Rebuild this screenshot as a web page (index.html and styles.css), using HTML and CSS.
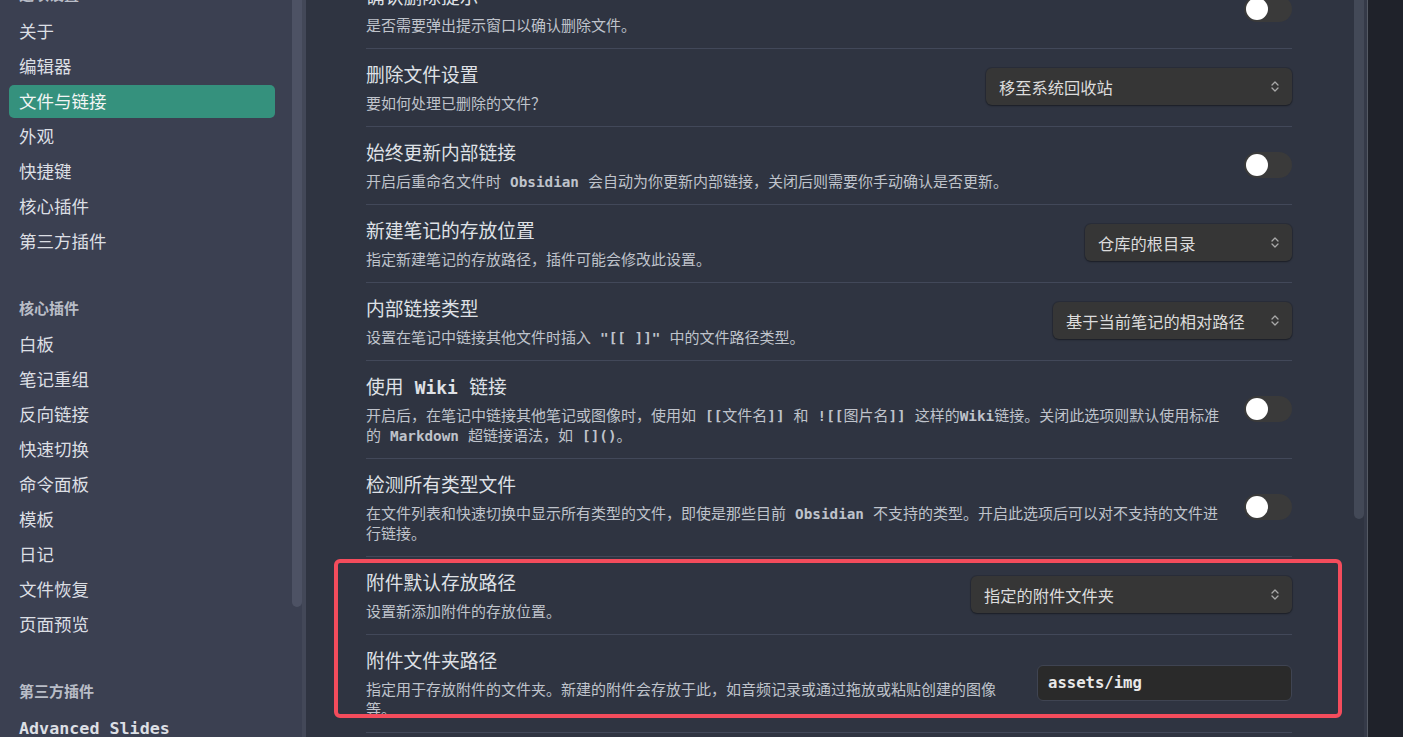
FILE: index.html
```html
<!DOCTYPE html>
<html lang="zh-CN">
<head>
<meta charset="utf-8">
<title>设置 - 文件与链接</title>
<link rel="stylesheet" href="styles.css">
</head>
<body>
<div class="app">
  <aside class="sidebar">
    <nav class="nav">
      <div class="nav-inner">
        <div class="nav-group first">
          <div class="nav-header">选项设置</div>
          <div class="nav-item">关于</div>
          <div class="nav-item">编辑器</div>
          <div class="nav-item active">文件与链接</div>
          <div class="nav-item">外观</div>
          <div class="nav-item">快捷键</div>
          <div class="nav-item">核心插件</div>
          <div class="nav-item">第三方插件</div>
        </div>
        <div class="nav-group">
          <div class="nav-header">核心插件</div>
          <div class="nav-item">白板</div>
          <div class="nav-item">笔记重组</div>
          <div class="nav-item">反向链接</div>
          <div class="nav-item">快速切换</div>
          <div class="nav-item">命令面板</div>
          <div class="nav-item">模板</div>
          <div class="nav-item">日记</div>
          <div class="nav-item">文件恢复</div>
          <div class="nav-item">页面预览</div>
        </div>
        <div class="nav-group">
          <div class="nav-header">第三方插件</div>
          <div class="nav-item"><span class="m">Advanced Slides</span></div>
        </div>
      </div>
    </nav>
    <div class="side-scroll"><div class="side-thumb"></div><div class="side-track"></div></div>
  </aside>

  <main class="main">
    <div class="main-body">
      <div class="settings">
        <div class="row">
          <div class="info">
            <div class="name">确认删除提示</div>
            <div class="desc">是否需要弹出提示窗口以确认删除文件。</div>
          </div>
          <div class="toggle"><span class="knob"></span></div>
        </div>
        <div class="row">
          <div class="info">
            <div class="name">删除文件设置</div>
            <div class="desc">要如何处理已删除的文件？</div>
          </div>
          <div class="select w-trash"><span>移至系统回收站</span><svg class="chev" viewBox="0 0 8 13" width="8" height="13"><path d="M1 5 L4 2 L7 5 M1 8 L4 11 L7 8" fill="none" stroke="currentColor" stroke-width="1.3" stroke-linecap="round" stroke-linejoin="round"/></svg></div>
        </div>
        <div class="row">
          <div class="info">
            <div class="name">始终更新内部链接</div>
            <div class="desc">开启后重命名文件时 <span class="m">Obsidian</span> 会自动为你更新内部链接，关闭后则需要你手动确认是否更新。</div>
          </div>
          <div class="toggle"><span class="knob"></span></div>
        </div>
        <div class="row">
          <div class="info">
            <div class="name">新建笔记的存放位置</div>
            <div class="desc">指定新建笔记的存放路径，插件可能会修改此设置。</div>
          </div>
          <div class="select w-root"><span>仓库的根目录</span><svg class="chev" viewBox="0 0 8 13" width="8" height="13"><path d="M1 5 L4 2 L7 5 M1 8 L4 11 L7 8" fill="none" stroke="currentColor" stroke-width="1.3" stroke-linecap="round" stroke-linejoin="round"/></svg></div>
        </div>
        <div class="row">
          <div class="info">
            <div class="name">内部链接类型</div>
            <div class="desc">设置在笔记中链接其他文件时插入 <span class="m">"[[ ]]"</span> 中的文件路径类型。</div>
          </div>
          <div class="select w-rel"><span>基于当前笔记的相对路径</span><svg class="chev" viewBox="0 0 8 13" width="8" height="13"><path d="M1 5 L4 2 L7 5 M1 8 L4 11 L7 8" fill="none" stroke="currentColor" stroke-width="1.3" stroke-linecap="round" stroke-linejoin="round"/></svg></div>
        </div>
        <div class="row">
          <div class="info">
            <div class="name">使用 <span class="m">Wiki</span> 链接</div>
            <div class="desc">开启后，在笔记中链接其他笔记或图像时，使用如 <span class="m">[[</span>文件名<span class="m">]]</span> 和 <span class="m">![[</span>图片名<span class="m">]]</span> 这样的<span class="m">Wiki</span>链接。关闭此选项则默认使用标准的 <span class="m">Markdown</span> 超链接语法，如 <span class="m">[]()</span>。</div>
          </div>
          <div class="toggle"><span class="knob"></span></div>
        </div>
        <div class="row">
          <div class="info">
            <div class="name">检测所有类型文件</div>
            <div class="desc">在文件列表和快速切换中显示所有类型的文件，即使是那些目前 <span class="m">Obsidian</span> 不支持的类型。开启此选项后可以对不支持的文件进行链接。</div>
          </div>
          <div class="toggle"><span class="knob"></span></div>
        </div>
        <div class="row">
          <div class="info">
            <div class="name">附件默认存放路径</div>
            <div class="desc">设置新添加附件的存放位置。</div>
          </div>
          <div class="select w-attach"><span>指定的附件文件夹</span><svg class="chev" viewBox="0 0 8 13" width="8" height="13"><path d="M1 5 L4 2 L7 5 M1 8 L4 11 L7 8" fill="none" stroke="currentColor" stroke-width="1.3" stroke-linecap="round" stroke-linejoin="round"/></svg></div>
        </div>
        <div class="row">
          <div class="info">
            <div class="name">附件文件夹路径</div>
            <div class="desc">指定用于存放附件的文件夹。新建的附件会存放于此，如音频记录或通过拖放或粘贴创建的图像等。</div>
          </div>
          <div class="text-input">assets/img</div>
        </div>
        <div class="row">
          <div class="info">
            <div class="name">新附件的默认位置</div>
            <div class="desc">新添加的附件将存放于此。</div>
          </div>
          <div class="toggle"><span class="knob"></span></div>
        </div>
      </div>
      <div class="highlight"></div>
    </div>
    <div class="main-scroll"><div class="main-thumb"></div><div class="main-track"></div></div>
  </main>
  <div class="divider"></div>
  <div class="right-panel"></div>
</div>
</body>
</html>
```

FILE: styles.css
```css
* { box-sizing: border-box; }
html, body { margin: 0; padding: 0; }
body {
  font-family: "DejaVu Sans Mono", "Noto Sans CJK SC", monospace;
  color: #dcdfe5;
  background: #2f3441;
  overflow: hidden;
}
.app {
  display: flex;
  width: 1403px;
  height: 737px;
  overflow: hidden;
}
.m {
  font-family: "DejaVu Sans Mono", "Liberation Mono", monospace;
  font-weight: 700;
  font-size: 0.955em;
  line-height: 1;
}

/* Sidebar */
.sidebar {
  width: 306px;
  flex: 0 0 306px;
  display: flex;
  background: #3b4051;
}
.nav {
  flex: 1;
  padding: 0 17px 0 9px;
  overflow: hidden;
}
.nav-inner { margin-top: -23px; }
.nav-header {
  font-size: 15px;
  font-weight: 700;
  line-height: 20px;
  color: #b9bdc7;
  padding: 39px 10px 9px;
}
.nav-group.first .nav-header { padding-top: 8px; padding-bottom: 10px; }
.nav-item {
  height: 33px;
  line-height: 35px;
  margin-bottom: 2px;
  padding: 0 10px;
  font-size: 17.5px;
  color: #dcdfe4;
  border-radius: 5px;
  white-space: nowrap;
}
.nav-item.active {
  background: #35917d;
  color: #f2f5f4;
}
.side-scroll {
  width: 14px;
  display: flex;
}
.side-thumb {
  width: 10px;
  height: 607px;
  background: #4d5264;
  border-radius: 0 0 5px 5px;
}
.side-track {
  width: 4px;
  background: #434858;
}

/* Main */
.main {
  flex: 1;
  display: flex;
  background: #2f3441;
  min-width: 0;
}
.main-body {
  position: relative;
  flex: 1;
  padding: 0 62px 0 60px;
  overflow: hidden;
}
.settings { margin-top: -30px; }
.row {
  display: flex;
  align-items: center;
  border-top: 1px solid #424859;
  padding: 12px 0 14px;
}
.info {
  flex: 1;
  min-width: 0;
  margin-right: 20px;
  padding-top: 2px;
  margin-bottom: -2px;
}
.name {
  font-size: 18.75px;
  line-height: 26px;
  color: #dfe1e6;
}
.desc {
  margin-top: 5px;
  font-size: 15px;
  line-height: 20px;
  color: #bfc3cb;
}
.toggle {
  flex: 0 0 auto;
  width: 48px;
  height: 26px;
  border-radius: 13px;
  background: #3a3a3a;
  padding: 2px;
  display: flex;
  align-items: center;
}
.knob {
  width: 22px;
  height: 22px;
  border-radius: 50%;
  background: #ffffff;
}
.select {
  flex: 0 0 auto;
  height: 37px;
  display: flex;
  align-items: center;
  justify-content: space-between;
  padding: 0 13px;
  background: #363636;
  border-radius: 6px;
  font-size: 16.25px;
  color: #dcdcdc;
  box-shadow: 0 1px 2px rgba(0, 0, 0, 0.35), 0 0 0 1px rgba(0, 0, 0, 0.12);
}
.chev { color: #a9a9a9; flex: 0 0 auto; }
.w-trash { width: 306px; }
.w-root { width: 207px; }
.w-rel { width: 239px; }
.w-attach { width: 321px; }
.text-input {
  flex: 0 0 auto;
  width: 255px;
  height: 36px;
  line-height: 34px;
  padding: 0 10px;
  background: #2a2a2a;
  border: 1px solid #3f4452;
  border-radius: 6px;
  font-family: "DejaVu Sans Mono", "Liberation Mono", monospace;
  font-weight: 700;
  font-size: 15.6px;
  color: #e8e8e8;
}
.highlight {
  position: absolute;
  left: 28px;
  top: 559px;
  width: 1008px;
  height: 159px;
  border: 4px solid #f44c5c;
  border-radius: 6px;
  pointer-events: none;
}
.main-scroll {
  width: 13px;
  display: flex;
}
.main-thumb {
  width: 10px;
  height: 519px;
  background: #434957;
  border-radius: 0 0 5px 5px;
}
.main-track {
  width: 3px;
  background: #353a48;
}
.divider {
  width: 1px;
  background: #555a64;
}
.right-panel {
  width: 35px;
  background: #1f222a;
}
```
